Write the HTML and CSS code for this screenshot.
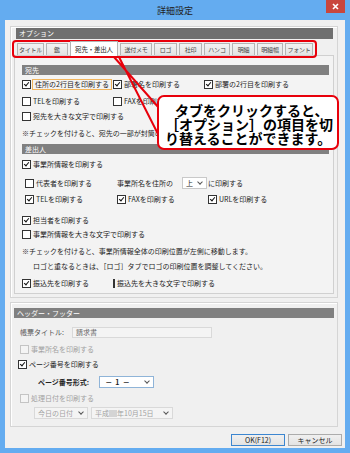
FILE: index.html
```html
<!DOCTYPE html>
<html lang="ja">
<head>
  <meta charset="UTF-8">
  <meta name="viewport" content="width=device-width, initial-scale=1.0">
  <title>詳細設定</title>
  <link rel="stylesheet" href="styles.css">
</head>
<body>
  <div class="window">
    <div class="titlebar">
      <span></span>
      <span class="title">詳細設定</span>
      <span class="close">
        <svg width="7" height="7" viewBox="0 0 7 7"><path d="M1 1L6 6M6 1L1 6" stroke="#fff" stroke-width="1.6"/></svg>
      </span>
    </div>

    <div class="client">
      <!-- Options group -->
      <div class="group options">
        <div class="bar bar-dark">オプション</div>
        <div class="tabs">
          <span class="tab">タイトル</span>
          <span class="tab">鑑</span>
          <span class="tab active">宛先・差出人</span>
          <span class="tab">送付メモ</span>
          <span class="tab">ロゴ</span>
          <span class="tab">社印</span>
          <span class="tab">ハンコ</span>
          <span class="tab">明細</span>
          <span class="tab">明細幅</span>
          <span class="tab">フォント</span>
        </div>

        <div class="panel">
          <div class="bar">宛先</div>
          <div class="row cols mt3">
            <label class="cb"><span class="box on"></span><span class="focus">住所の2行目を印刷する</span></label>
            <label class="cb"><span class="box on"></span>部署名を印刷する</label>
            <label class="cb"><span class="box on"></span>部署の2行目を印刷する</label>
          </div>
          <div class="row cols mt5">
            <label class="cb"><span class="box"></span>TELを印刷する</label>
            <label class="cb"><span class="box"></span>FAXを印刷する</label>
          </div>
          <div class="row mt3">
            <label class="cb"><span class="box"></span>宛先を大きな文字で印刷する</label>
          </div>
          <div class="row mt5">
            <span>※チェックを付けると、宛先の一部が封筒の窓枠</span>
          </div>

          <div class="bar mt5">差出人</div>
          <div class="row mt4">
            <label class="cb"><span class="box on"></span>事業所情報を印刷する</label>
          </div>
          <div class="row cols sub mt7">
            <label class="cb"><span class="box"></span>代表者を印刷する</label>
            <span class="inline">事業所名を住所の<span class="select sel-pos">上<i class="chev"></i></span></span>
            <span>に印刷する</span>
          </div>
          <div class="row cols sub mt4">
            <label class="cb"><span class="box on"></span>TELを印刷する</label>
            <label class="cb"><span class="box on"></span>FAXを印刷する</label>
            <label class="cb"><span class="box on"></span>URLを印刷する</label>
          </div>
          <div class="row mt9">
            <label class="cb"><span class="box on"></span>担当者を印刷する</label>
          </div>
          <div class="row mt2">
            <label class="cb"><span class="box"></span>事業所情報を大きな文字で印刷する</label>
          </div>
          <div class="row mt5">
            <span>※チェックを付けると、事業所情報全体の印刷位置が左側に移動します。</span>
          </div>
          <div class="row note mt3">
            <span>ロゴと重なるときは、［ロゴ］タブでロゴの印刷位置を調整してください。</span>
          </div>
          <div class="row cols mt5">
            <label class="cb"><span class="box on"></span>振込先を印刷する</label>
            <label class="cb"><span class="box"></span>振込先を大きな文字で印刷する</label>
          </div>
        </div>
      </div>

      <!-- Header / footer group -->
      <div class="group hf">
        <div class="bar">ヘッダー・フッター</div>
        <div class="row mt8">
          <span class="label">帳票タイトル:</span>
          <span class="input">請求書</span>
        </div>
        <div class="row mt5 disabled">
          <label class="cb"><span class="box"></span>事業所名を印刷する</label>
        </div>
        <div class="row mt3 shift">
          <label class="cb"><span class="box on"></span>ページ番号を印刷する</label>
        </div>
        <div class="row mt6 indent">
          <span class="label strong">ページ番号形式:</span>
          <span class="select sel-page">－&nbsp;&nbsp;1&nbsp;&nbsp;－<i class="chev"></i></span>
        </div>
        <div class="row mt4 disabled">
          <label class="cb"><span class="box"></span>処理日付を印刷する</label>
        </div>
        <div class="row mt3 dates disabled">
          <span class="select sel-day">今日の日付<i class="chev"></i></span>
          <span class="select sel-date">平成<span class="redact"></span>年10月15日<i class="chev"></i></span>
        </div>
      </div>

      <div class="buttons">
        <button class="btn default">OK(F12)</button>
        <button class="btn">キャンセル</button>
      </div>
    </div>

    <!-- Annotation overlay -->
    <div class="tab-mark"></div>
    <svg class="pointer" width="350" height="453" viewBox="0 0 350 453">
      <path d="M114 57L159 108M119 57L159 136" stroke="#e8000b" stroke-width="2" fill="none"/>
    </svg>
    <div class="callout">タブをクリックすると、<br>［オプション］の項目を切<br>り替えることができます。</div>
  </div>
</body>
</html>
```

FILE: styles.css
```css
/* Dialog window */
body {
  margin: 0;
  padding: 0;
  font-family: "Noto Sans CJK JP", "Noto Sans", sans-serif;
  color: #1e1e1e;
}

.window {
  position: relative;
  width: 350px;
  height: 453px;
  box-sizing: border-box;
  background-color: #64acf0;
  padding: 0 5px 5px 5px;
  overflow: hidden;
}

/* Title bar */
.titlebar {
  display: grid;
  grid-template-columns: 1fr auto 1fr;
  height: 20px;
  align-items: center;
}

.title {
  font-size: 9px;
  line-height: 1;
  color: #222;
  padding-top: 1px;
}

.close {
  justify-self: end;
  align-self: start;
  width: 19px;
  height: 13px;
  background-color: #c9463d;
  display: flex;
  align-items: center;
  justify-content: center;
}

.client {
  height: 428px;
  background-color: #f0f0f0;
  font-size: 7px;
  line-height: 1;
  padding-top: 6px;
  box-sizing: border-box;
}

/* Group boxes */
.group {
  border: 1px solid #d5d5d5;
  box-shadow: inset 1px 1px 0 #fff;
  margin-left: 5px;
  width: 328px;
  box-sizing: border-box;
}

.options {
  padding: 1px 3px 3px 3px;
}

.bar {
  height: 10px;
  background-color: #808080;
  color: #fff;
  display: flex;
  align-items: center;
  padding-left: 3px;
}

.bar-dark {
  height: 11px;
  margin: 0 1px 0 2px;
  background-color: #6f6f6f;
}

/* Tabs */
.tabs {
  display: flex;
  align-items: flex-end;
  gap: 2px;
  height: 14px;
  margin: 2px 0 0 3px;
}

.tab {
  height: 12px;
  box-sizing: border-box;
  border: 1px solid #b4b4b4;
  border-bottom: none;
  background: linear-gradient(#f2f2f2, #e3e3e3);
  color: #444;
  font-size: 6px;
  letter-spacing: -0.2px;
  white-space: nowrap;
  display: flex;
  align-items: center;
  justify-content: center;
}

.tab:nth-child(1) { width: 27px; }
.tab:nth-child(2) { width: 22px; }
.tab:nth-child(3) { width: 48px; }
.tab:nth-child(4) { width: 32px; }
.tab:nth-child(5) { width: 23px; }
.tab:nth-child(6) { width: 23px; }
.tab:nth-child(7) { width: 26px; }
.tab:nth-child(8) { width: 23px; }
.tab:nth-child(9) { width: 26px; }
.tab:nth-child(10) { width: 28px; }

.tab.active {
  height: 15px;
  margin-bottom: -1px;
  background: #fff;
  color: #222;
  font-size: 6.5px;
  position: relative;
  z-index: 1;
}

.panel {
  border: 1px solid #d0d0d0;
  background-color: #f3f3f3;
  padding: 9px 4px 4px 7px;
}

/* Rows */
.row {
  display: flex;
  align-items: center;
  height: 12px;
  white-space: nowrap;
}

.cols {
  display: grid;
  grid-template-columns: 91px 91px auto;
  align-items: center;
}

.sub {
  padding-left: 3px;
  grid-template-columns: 92px 91px auto;
}

.note { padding-left: 11px; }

.mt2 { margin-top: 2px; }
.mt3 { margin-top: 3px; }
.mt4 { margin-top: 4px; }
.mt5 { margin-top: 5px; }
.mt6 { margin-top: 6px; }
.mt7 { margin-top: 7px; }
.mt8 { margin-top: 8px; }
.mt9 { margin-top: 9px; }

/* Checkboxes */
.cb {
  display: flex;
  align-items: center;
  gap: 2px;
}

.box {
  width: 9px;
  height: 9px;
  box-sizing: border-box;
  border: 1px solid #333;
  background-color: #fff;
  position: relative;
}

.box.on::after {
  content: "";
  position: absolute;
  left: 2px;
  top: 0px;
  width: 2px;
  height: 4px;
  border: solid #111;
  border-width: 0 1.5px 1.5px 0;
  transform: rotate(40deg);
}

.focus {
  border: 1px solid #f0b45c;
  padding: 1px 2px;
  margin-left: -1px;
}

.disabled { color: #a2a2a2; }
.disabled .box {
  border-color: #c4c4c4;
  background-color: #f4f4f4;
}

/* Combo boxes */
.inline {
  display: flex;
  align-items: center;
}

.select {
  display: flex;
  align-items: center;
  height: 12px;
  box-sizing: border-box;
  border: 1px solid #c9c9c9;
  background-color: #fff;
  padding-left: 3px;
  position: relative;
}

.chev {
  margin-left: auto;
  margin-right: 4px;
  width: 3px;
  height: 3px;
  border: solid #555;
  border-width: 0 1px 1px 0;
  transform: rotate(45deg);
  margin-top: -2px;
}

.sel-pos { width: 25px; margin-left: 9px; }
.sel-page { width: 55px; margin-left: 10px; border-color: #8fb4d8; padding-left: 5px; font-weight: bold; }
.sel-day { width: 54px; margin-left: 14px; background-color: #f4f4f4; border-color: #d9d9d9; }
.sel-date { width: 82px; margin-left: 3px; background-color: #f4f4f4; border-color: #d9d9d9; }

.redact {
  display: inline-block;
  width: 8px;
  height: 7px;
  background-color: #d4d4d4;
}

/* Header / footer */
.hf {
  margin-top: 4px;
  padding: 5px 3px 7px 3px;
}

.hf .row { padding-left: 6px; }
.hf .shift { padding-left: 4px; }
.hf .indent { padding-left: 24px; }
.hf .dates { padding-left: 6px; }

.label { color: #555; }
.strong { color: #222; font-weight: bold; }

.input {
  margin-left: 8px;
  width: 140px;
  height: 11px;
  box-sizing: border-box;
  border: 1px solid #d9d9d9;
  background-color: #f4f4f4;
  color: #666;
  padding-left: 3px;
  display: flex;
  align-items: center;
}

/* Buttons */
.buttons {
  display: flex;
  justify-content: flex-end;
  gap: 3px;
  margin: 7px 3px 0 0;
}

.btn {
  font-family: inherit;
  font-size: 7px;
  line-height: 1;
  width: 54px;
  height: 12px;
  padding: 0;
  border: 1px solid #acacac;
  background: linear-gradient(#f0f0f0, #e3e3e3);
  color: #222;
}

.btn.default {
  border-color: #3c86d0;
}

/* Annotation overlay */
.tab-mark {
  position: absolute;
  left: 12px;
  top: 40px;
  width: 305px;
  height: 18px;
  box-sizing: border-box;
  border: 2px solid #e8000b;
  border-radius: 4px;
}

.pointer {
  position: absolute;
  left: 0;
  top: 0;
  pointer-events: none;
}

.callout {
  position: absolute;
  left: 157px;
  top: 95px;
  width: 182px;
  height: 55px;
  box-sizing: border-box;
  border: 2px solid #e8000b;
  border-radius: 7px;
  background-color: #fff;
  padding: 6px 0 0 6px;
  font-size: 14px;
  line-height: 14px;
  font-weight: bold;
  color: #000;
  white-space: nowrap;
  text-indent: 10px;
}
```
